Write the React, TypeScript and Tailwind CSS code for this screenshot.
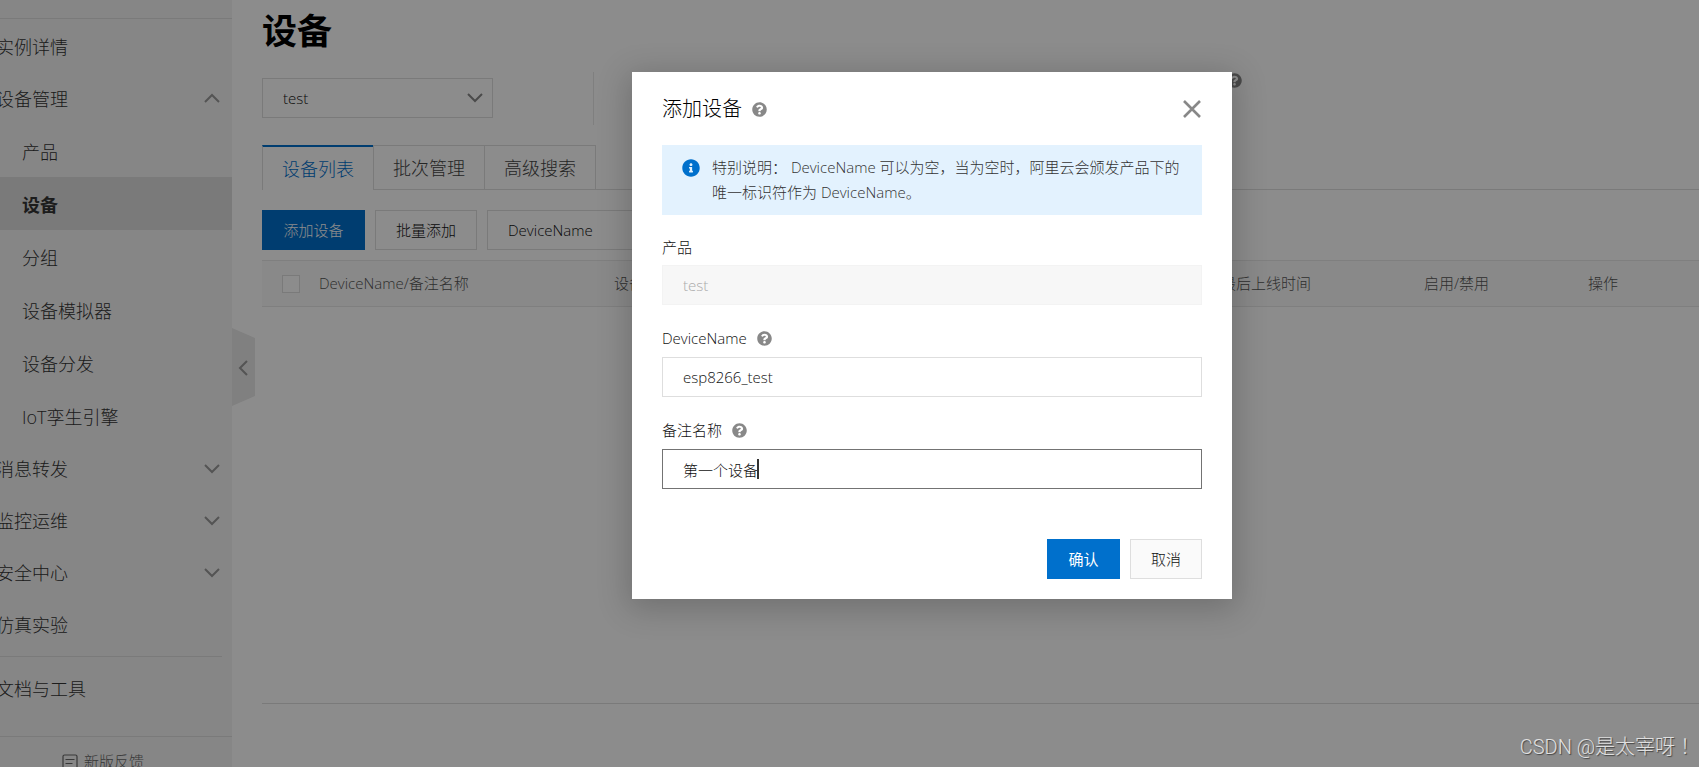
import React, { useState } from "react";
import { FaInfoCircle, FaQuestionCircle } from "react-icons/fa";

type Direction = "up" | "down" | "left";

const chevronPoints: Record<Direction, string> = {
  up: "1,11 8,4 15,11",
  down: "1,4 8,11 15,4",
  left: "11,1 4,8 11,15",
};

function Chevron({ direction }: { direction: Direction }) {
  return (
    <svg viewBox="0 0 16 16" className="size-4 shrink-0" fill="none" stroke="currentColor" strokeWidth="2" aria-hidden="true">
      <polyline points={chevronPoints[direction]} />
    </svg>
  );
}

function HelpIcon() {
  return <FaQuestionCircle className="size-[15px] shrink-0 text-[#888]" aria-hidden="true" />;
}

const subItems = ["产品", "设备", "分组", "设备模拟器", "设备分发", "IoT孪生引擎"];
const groups = [
  { name: "消息转发", expandable: true },
  { name: "监控运维", expandable: true },
  { name: "安全中心", expandable: true },
  { name: "仿真实验", expandable: false },
];

function Sidebar() {
  return (
    <aside className="relative w-[232px] shrink-0 bg-[#f5f5f5] text-lg text-[#333]">
      <nav className="flex h-full flex-col overflow-hidden pt-[18px]">
        <a href="#detail" className="flex h-[54px] shrink-0 items-center border-t border-[#dedede] pt-0.5">
          <span className="-ml-1">实例详情</span>
        </a>
        <a href="#manage" className="flex h-[52px] shrink-0 items-center justify-between pt-0.5 pr-3">
          <span className="-ml-1">设备管理</span>
          <span className="text-[#999]"><Chevron direction="up" /></span>
        </a>
        {subItems.map((name) => (
          <a
            key={name}
            href={`#${name}`}
            className={
              name === "设备"
                ? "flex h-[53px] shrink-0 items-center bg-[#dedede] pt-0.5 pl-[22px] font-bold text-[#333]"
                : "flex h-[53px] shrink-0 items-center pt-0.5 pl-[22px]"
            }
          >
            {name}
          </a>
        ))}
        {groups.map((group) => (
          <a key={group.name} href={`#${group.name}`} className="flex h-[52px] shrink-0 items-center justify-between pt-0.5 pr-3">
            <span className="-ml-1">{group.name}</span>
            {group.expandable && <span className="text-[#999]"><Chevron direction="down" /></span>}
          </a>
        ))}
        <hr className="mt-1.5 mr-2.5 shrink-0 border-[#dedede]" />
        <a href="#docs" className="flex h-[79px] shrink-0 items-center pb-4">
          <span className="-ml-1">文档与工具</span>
        </a>
        <a href="#feedback" className="flex h-[50px] shrink-0 items-center gap-1.5 border-t border-[#dedede] pl-[62px] text-[15px] text-[#666]">
          <svg viewBox="0 0 16 16" className="size-4" fill="none" stroke="currentColor" strokeWidth="1.2" aria-hidden="true">
            <rect x="1" y="1" width="14" height="14" rx="1.5" />
            <path d="M3.5 5.5h9M3.5 9.5h7" />
          </svg>
          新版反馈
        </a>
      </nav>
      <button
        type="button"
        aria-label="收起"
        className="absolute top-[328px] left-full flex h-[78px] w-[23px] items-center justify-center bg-[#e9e9e9] pt-0.5 text-[#999] [clip-path:polygon(0_0,100%_10px,100%_68px,0_100%)]"
      >
        <Chevron direction="left" />
      </button>
    </aside>
  );
}

function Tabs() {
  return (
    <div role="tablist" className="mt-5 flex text-lg text-[#444]">
      <button type="button" role="tab" aria-selected="true" className="h-[45px] border-t-2 border-l border-t-[#0070cc] border-l-[#dedede] px-[19px] text-[#0070cc]">
        设备列表
      </button>
      <button type="button" role="tab" aria-selected="false" className="h-[45px] border border-[#dedede] px-[19px]">批次管理</button>
      <button type="button" role="tab" aria-selected="false" className="h-[45px] border border-l-0 border-[#dedede] px-[19px]">高级搜索</button>
      <div className="flex-1 border-b border-[#dedede]" />
    </div>
  );
}

function DevicePage() {
  return (
    <main className="flex min-w-0 flex-1 flex-col overflow-hidden pl-[30px] text-[15px] text-[#111]">
      <h1 className="pt-[7px] text-[35px] leading-[48px] font-bold text-black">设备</h1>
      <div className="mt-[17px] flex h-[53px] items-start">
        <div className="relative mt-1.5 w-[231px]">
          <select aria-label="产品筛选" defaultValue="test" className="h-10 w-full appearance-none border border-[#dedede] bg-transparent px-5">
            <option>test</option>
          </select>
          <span className="pointer-events-none absolute top-3 right-2.5 text-[#888]"><Chevron direction="down" /></span>
        </div>
        <div className="ml-[100px] h-full w-px bg-[#e8e8e8]" />
        <div className="mt-[1px] ml-[633px]"><HelpIcon /></div>
      </div>
      <Tabs />
      <div className="mt-5 flex h-10 gap-2.5">
        <button type="button" className="w-[103px] bg-[#0070cc] text-white">添加设备</button>
        <button type="button" className="border border-[#dedede] px-5">批量添加</button>
        <select aria-label="搜索条件" defaultValue="DeviceName" className="w-[200px] appearance-none border border-[#dedede] bg-transparent px-5">
          <option>DeviceName</option>
        </select>
      </div>
      <table className="mt-2.5 w-full table-fixed border-y border-[#e8e8e8] bg-[#fafafa] text-left text-[#555]">
        <thead>
          <tr className="h-[46px]">
            <th className="w-[57px] pl-5">
              <input type="checkbox" aria-label="全选" className="block size-[18px] appearance-none border border-[#dedede] bg-white" />
            </th>
            <th className="w-[295px] font-light">DeviceName/备注名称</th>
            <th className="w-[607px] font-light">设备所属产品</th>
            <th className="w-[203px] font-light">最后上线时间</th>
            <th className="w-[164px] font-light">启用/禁用</th>
            <th className="font-light">操作</th>
          </tr>
        </thead>
      </table>
      <div className="mt-auto mb-[63px] border-t border-[#dedede]" />
    </main>
  );
}

const fieldClass = "block h-10 w-full border px-5 outline-none";

function AddDeviceDialog() {
  const [deviceName, setDeviceName] = useState("esp8266_test");
  const [remark, setRemark] = useState("第一个设备");
  return (
    <div
      role="dialog"
      aria-modal="true"
      aria-labelledby="dialog-title"
      className="w-[600px] bg-white px-[30px] pt-[22px] pb-5 text-[15px] text-[#111] shadow-[0_6px_30px_4px_rgba(0,0,0,0.2)]"
    >
      <header className="flex h-[30px] items-center">
        <h2 id="dialog-title" className="text-xl font-light text-black">添加设备</h2>
        <span className="ml-2.5"><HelpIcon /></span>
        <button type="button" aria-label="关闭" className="ml-auto text-[#888]">
          <svg viewBox="0 0 20 20" className="size-5" fill="none" stroke="currentColor" strokeWidth="2.6" aria-hidden="true">
            <path d="M2 2l16 16M18 2L2 18" />
          </svg>
        </button>
      </header>
      <div className="mt-[21px] flex gap-3 bg-[#e3f2fe] py-2.5 pl-5 leading-[25px] text-[#333]">
        <FaInfoCircle className="mt-1 size-[18px] shrink-0 text-[#0070cc]" aria-hidden="true" />
        <p>
          特别说明： DeviceName 可以为空，当为空时，阿里云会颁发产品下的
          <br />
          唯一标识符作为 DeviceName。
        </p>
      </div>
      <form onSubmit={(event) => event.preventDefault()}>
        <label htmlFor="product" className="mt-5 flex h-[30px] items-start pt-px">产品</label>
        <input id="product" disabled value="test" className={`${fieldClass} border-[#f3f3f3] bg-[#f7f7f7] text-[#aaa]`} />
        <label htmlFor="device-name" className="mt-[22px] flex h-[30px] items-start gap-2.5">
          DeviceName
          <span className="pt-1"><HelpIcon /></span>
        </label>
        <input
          id="device-name"
          value={deviceName}
          onChange={(event) => setDeviceName(event.target.value)}
          className={`${fieldClass} border-[#dedede]`}
        />
        <label htmlFor="remark" className="mt-[22px] flex h-[30px] items-start gap-2.5">
          备注名称
          <span className="pt-1"><HelpIcon /></span>
        </label>
        <div className="relative">
          <input
            id="remark"
            value={remark}
            onChange={(event) => setRemark(event.target.value)}
            className={`${fieldClass} border-[#737373] caret-transparent`}
          />
          <span className="pointer-events-none absolute top-2.5 left-[95px] h-5 w-0.5 bg-[#333]" />
        </div>
        <div className="mt-[50px] flex h-10 justify-end gap-2.5">
          <button type="submit" className="w-[73px] bg-[#0070cc] font-normal text-white">确认</button>
          <button type="button" className="border border-[#dedede] bg-[#fafafa] px-5">取消</button>
        </div>
      </form>
    </div>
  );
}

export default function App() {
  return (
    <div className="relative flex h-screen overflow-hidden bg-white font-['Open_Sans','Noto_Sans_CJK_SC',sans-serif] font-light">
      <Sidebar />
      <DevicePage />
      <div className="absolute inset-0 flex items-start justify-center bg-black/45 pt-[72px] pl-[165px]">
        <AddDeviceDialog />
      </div>
      <p className="absolute right-1 bottom-1.5 font-['Roboto','Noto_Sans_CJK_TC',sans-serif] text-xl leading-7 font-light text-[#e0e0e0] [text-shadow:1px_1px_1px_#444]">
        CSDN @是太宰呀！
      </p>
    </div>
  );
}
